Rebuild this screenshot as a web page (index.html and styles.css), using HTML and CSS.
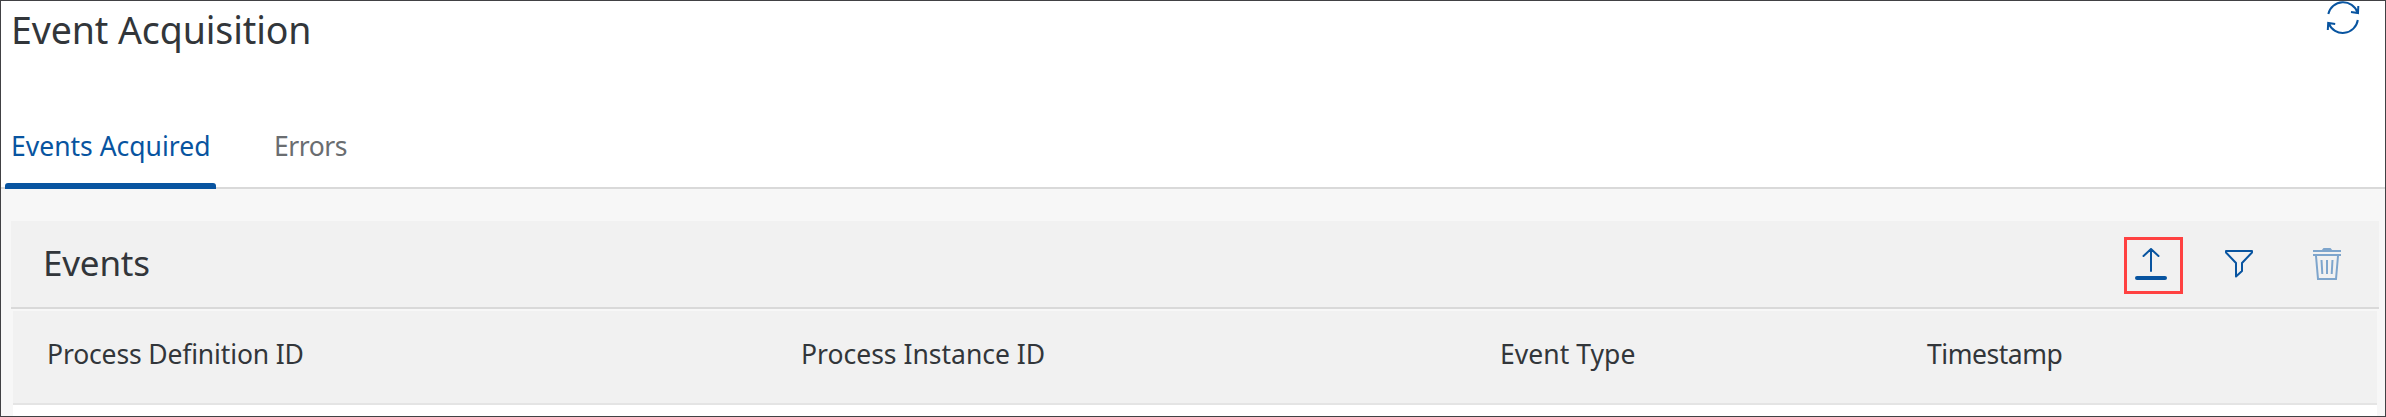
FILE: index.html
```html
<!DOCTYPE html>
<html lang="en">
<head>
<meta charset="utf-8">
<title>Event Acquisition</title>
<link rel="stylesheet" href="styles.css">
</head>
<body>
<div class="page">
  <header class="page-header">
    <h1 class="title">Event Acquisition</h1>
    <button class="icon-button" aria-label="Refresh">
      <svg width="36" height="36" viewBox="0 0 36 36" fill="none" stroke="currentColor" stroke-width="2">
        <path d="M2.300 14A15.200 15.200 0 0 1 31.500 12.500M32.300 6L32 13l-7-.9M31.800 20A15.200 15.200 0 0 1 2.700 23.500M1.800 30L2.200 23l7 .9"/>
      </svg>
    </button>
  </header>
  <nav class="tabs">
    <a class="tab tab-active">Events Acquired</a>
    <a class="tab tab-errors">Errors</a>
  </nav>
  <main class="content">
    <div class="toolbar">
      <h2 class="toolbar-title">Events</h2>
      <div class="actions">
        <button class="icon-button highlighted" aria-label="Upload">
          <svg width="35" height="35" viewBox="0 0 35 35" fill="none" stroke="currentColor" stroke-linecap="round">
            <path stroke-width="2" d="M18 23V1.500M10.500 8L18 1l7.500 7"/>
            <path stroke-width="4" d="M4 30h28"/>
          </svg>
        </button>
        <button class="icon-button" aria-label="Filter">
          <svg width="35" height="35" viewBox="0 0 35 35" fill="none" stroke="currentColor" stroke-width="2" stroke-linejoin="round">
            <path d="M5 3h26v1.500L21 15v8l-6 5.500V15L5 4.500z"/>
          </svg>
        </button>
        <button class="icon-button disabled" aria-label="Delete">
          <svg width="35" height="35" viewBox="0 0 35 35" fill="none" stroke="currentColor" stroke-width="2">
            <path d="M4 3h28M4 7h28M7 8l2 23h18l2-23M12.500 12l.8 14M18 12v14M23.500 12l-.8 14"/>
            <path d="M12.500 2.500l2-2.500h7l2 2.500z" fill="currentColor" stroke="none"/>
          </svg>
        </button>
      </div>
    </div>
    <div class="table">
      <div class="table-head">
        <span>Process Definition ID</span>
        <span class="instance">Process Instance ID</span>
        <span class="type">Event Type</span>
        <span class="timestamp">Timestamp</span>
      </div>
    </div>
  </main>
</div>
</body>
</html>
```
FILE: styles.css
```css
* { box-sizing: border-box; }
body { margin: 0; }
.page {
  display: flex;
  flex-direction: column;
  height: 417px;
  overflow: hidden;
  border: 1px solid #414144;
  background: #fff;
  color: #32363a;
  font-family: "Noto Sans", "Open Sans", sans-serif;
}
.page-header {
  display: flex;
  flex: none;
  justify-content: space-between;
  height: 108px;
  padding: 3px 23px 0 10px;
}
.title { margin: 0; font-size: 37.5px; font-weight: 400; line-height: 51px; letter-spacing: -0.1px; }
.icon-button {
  display: flex;
  align-items: center;
  justify-content: center;
  width: 59px;
  height: 57px;
  padding: 0;
  border: 0;
  background: none;
  color: #0854a0;
}
.page-header .icon-button { width: 36px; height: 36px; margin-top: -4px; }
.tabs {
  display: flex;
  flex: none;
  height: 80px;
  padding-left: 4px;
  border-bottom: 2px solid #d9d9d9;
  font-size: 26.5px;
  line-height: 36px;
}
.tab { height: 80px; padding-top: 19px; color: #6a6d70; white-space: nowrap; }
.tab-active { width: 211px; padding-left: 6px; color: #0854a0; position: relative; }
.tab-active::after {
  content: "";
  position: absolute;
  inset: auto 0 0;
  height: 6px;
  border-radius: 3px 3px 0 0;
  background: #0854a0;
}
.tab-errors { margin-left: 58px; letter-spacing: -0.45px; }
.content { flex: none; padding: 32px 6px 0 10px; background: #f7f7f7; }
.toolbar {
  display: flex;
  align-items: flex-start;
  justify-content: space-between;
  height: 88px;
  padding: 16px 23px 0 32px;
  border-bottom: 2px solid #d9d9d9;
  background: #f1f1f1;
}
.toolbar-title { margin: 0; font-size: 35px; font-weight: 400; line-height: 51px; letter-spacing: -0.2px; }
.actions { display: flex; gap: 29px; }
.highlighted { margin-right: -3px; padding-right: 6px; border: 3px solid #ff4141; }
.disabled { color: #7ea5cc; }
.table { height: 105px; margin: 2px 2px 0; background: #fff; }
.table-head {
  display: grid;
  grid-template-columns: 754px 699px 427px 1fr;
  height: 94px;
  padding: 25px 0 0 34px;
  border-bottom: 2px solid #e4e4e4;
  background: #f1f1f1;
  font-size: 26.5px;
  line-height: 36px;
  letter-spacing: -0.15px;
}
.instance { letter-spacing: 0; }
.type { letter-spacing: 0.05px; }
.timestamp { letter-spacing: -0.45px; }
```
